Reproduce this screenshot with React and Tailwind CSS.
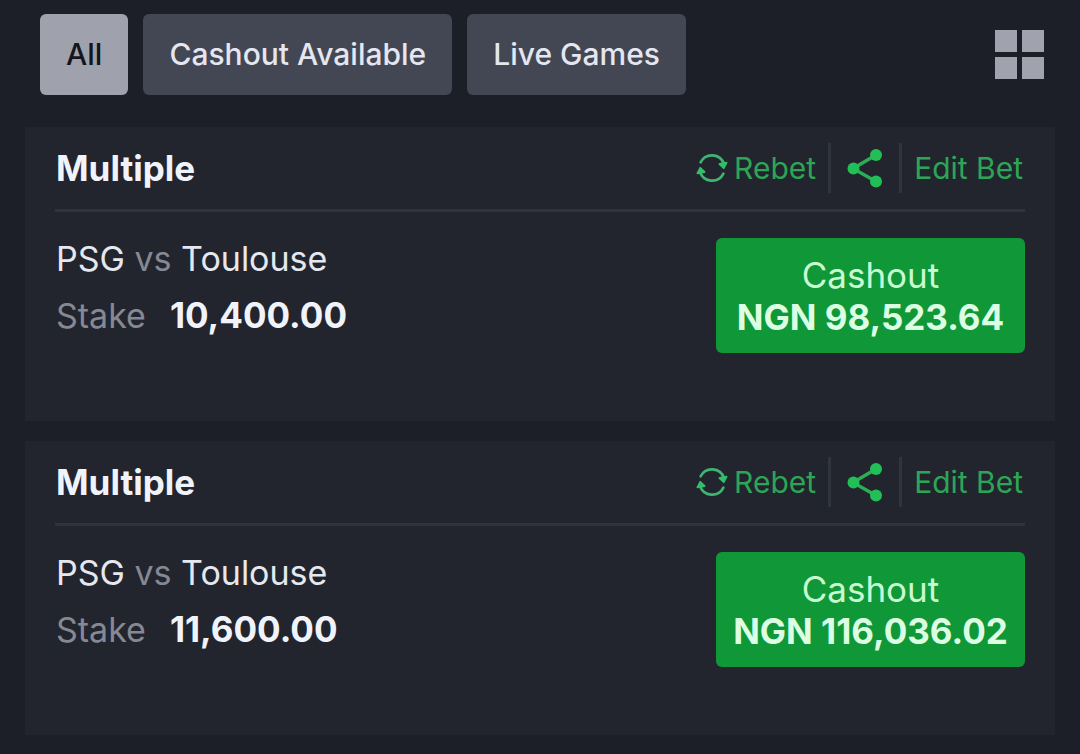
import { useState } from 'react';

const filters = ['All', 'Cashout Available', 'Live Games'];

const bets = [
  { id: 1, type: 'Multiple', home: 'PSG', away: 'Toulouse', stake: '10,400.00', cashout: '98,523.64' },
  { id: 2, type: 'Multiple', home: 'PSG', away: 'Toulouse', stake: '11,600.00', cashout: '116,036.02' }
];

function GridIcon() {
  return (
    <svg width="50" height="50" viewBox="0 0 50 50" fill="#a0a3ae" aria-hidden="true">
      <rect x="0" y="0" width="22" height="22" />
      <rect x="27" y="0" width="22" height="22" />
      <rect x="0" y="27" width="22" height="22" />
      <rect x="27" y="27" width="22" height="22" />
    </svg>
  );
}

function RebetIcon() {
  return (
    <svg width="32" height="30" viewBox="0 0 32 30" fill="none" aria-hidden="true">
      <g stroke="#3fb473" strokeWidth="2.6" strokeLinecap="round">
        <path d="M4.6 9.4A12.7 12.7 0 0 1 28 11" />
        <path d="M27.4 20.6A12.7 12.7 0 0 1 4 19" />
      </g>
      <path d="M23.4 11l7.2-1.4-2.8 5.6z" fill="#2fc068" stroke="#2fc068" strokeWidth="1.8" strokeLinejoin="round" />
      <path d="M8.6 19l-7.2 1.4 2.8-5.6z" fill="#2fc068" stroke="#2fc068" strokeWidth="1.8" strokeLinejoin="round" />
    </svg>
  );
}

function ShareIcon() {
  return (
    <svg width="36" height="40" viewBox="0 0 36 40" aria-hidden="true">
      <path d="M29 7L6 20.5l23 13" fill="none" stroke="#2cae55" strokeWidth="3.4" />
      <g fill="#21bf55">
        <circle cx="6.5" cy="20.5" r="6" />
        <circle cx="29" cy="7" r="6" />
        <circle cx="29" cy="33.5" r="6" />
      </g>
    </svg>
  );
}

function BetCard({ bet }) {
  return (
    <article className="bg-[#22252e] px-[30px] pb-[68px]">
      <div className="flex items-center justify-between h-[85px] border-b-3 border-[#2f333c]">
        <h2 className="pl-px text-[35px] font-bold text-[#f1f3fa]">{bet.type}</h2>
        <div className="flex items-center h-[50px] text-[30px] text-[#2ca656]">
          <button type="button" className="flex items-center gap-1.5 h-full pr-3">
            <RebetIcon />
            Rebet
          </button>
          <button type="button" aria-label="Share" className="flex items-center justify-center w-[74px] h-full border-x-3 border-[#30343d]">
            <ShareIcon />
          </button>
          <button type="button" className="h-full pl-3 pr-0.5">Edit Bet</button>
        </div>
      </div>

      <div className="flex items-start justify-between pt-[19px]">
        <div className="pl-px text-[34px] leading-14 text-[#e6e8ef]">
          <p>
            {bet.home} <span className="text-[#868993]">vs</span> {bet.away}
          </p>
          <p className="flex items-baseline gap-6">
            <span className="text-[#868993]">Stake</span>
            <span className="text-[35px] font-bold text-[#f1f3fa]">{bet.stake}</span>
          </p>
        </div>
        <button type="button" className="mt-[7px] w-[309px] h-[115px] rounded-md bg-[#109838] text-[35px] leading-[42px] text-[#c9fbd3]">
          <span className="block">Cashout</span>
          <span className="block font-bold text-[#dcffe3]">NGN {bet.cashout}</span>
        </button>
      </div>
    </article>
  );
}

function App() {
  const [active, setActive] = useState('All');

  return (
    <div className="min-h-screen bg-[#1c1f27] font-[Inter,sans-serif]">
      <header className="flex items-center justify-between pt-3.5 pl-10 pr-[35px]">
        <div className="flex gap-[15px]">
          {filters.map((filter) => (
            <button
              key={filter}
              type="button"
              onClick={() => setActive(filter)}
              className={`h-[81px] px-[26px] rounded-md text-[30px] font-medium whitespace-nowrap ${
                filter === active ? 'bg-[#9fa2ad] text-[#14161c]' : 'bg-[#434653] text-[#e4e6f0]'
              }`}
            >
              {filter}
            </button>
          ))}
        </div>
        <button type="button" aria-label="Grid view">
          <GridIcon />
        </button>
      </header>

      <main className="flex flex-col gap-5 px-[25px] pt-8">
        {bets.map((bet) => (
          <BetCard key={bet.id} bet={bet} />
        ))}
      </main>
    </div>
  );
}

export default App;
